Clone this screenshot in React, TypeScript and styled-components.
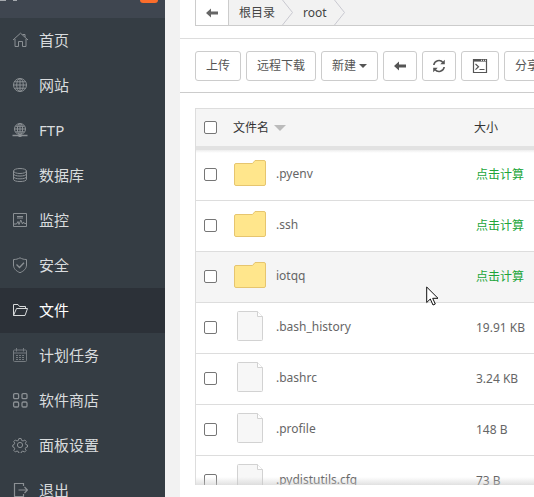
import React from "react";
import styled, { createGlobalStyle } from "styled-components";

const GlobalStyle = createGlobalStyle`
  *, *::before, *::after { box-sizing: border-box; }
  body {
    margin: 0;
    background: #f2f2f2;
    color: #666;
    font-family: "Noto Sans", "Noto Sans CJK SC", sans-serif;
    font-size: 12px;
    line-height: 18px;
  }
  a { color: inherit; text-decoration: none; }
`;

const Page = styled.div`
  display: flex;
  height: 100vh;
  overflow: hidden;
`;

const Sidebar = styled.nav`
  flex: 0 0 165px;
  background: #353d44;
  overflow: hidden;
`;

const SidebarTop = styled.div`
  display: flex;
  justify-content: space-between;
  height: 18px;
  padding-right: 7px;
  background: #3f4650;
`;

const Badge = styled.span`
  width: 18px;
  height: 3px;
  border-radius: 0 0 4px 4px;
  background: #fb6d2b;
`;

const MenuLink = styled.a<{ $active?: boolean }>`
  display: flex;
  align-items: center;
  gap: 11px;
  height: 45px;
  padding: 0 0 2px 12px;
  background: ${(p) => (p.$active ? "#2c3138" : "transparent")};
  color: ${(p) => (p.$active ? "#fff" : "#d9dcde")};
  font-size: 15px;
  line-height: 22px;

  svg { color: ${(p) => (p.$active ? "#d8dadb" : "#8b9094")}; }
`;

const MenuIcon = styled.svg`
  width: 16px;
  height: 16px;
  flex: none;
  fill: none;
  stroke: currentColor;
  stroke-width: 1;
`;

const Main = styled.main`
  display: flex;
  flex-direction: column;
  flex: 1;
  min-width: 0;
  margin-left: 15px;
  background: #fff;
`;

const PathBar = styled.div`
  padding: 0 0 12px 15px;
  border-bottom: 1px solid #ddd;
`;

const Crumbs = styled.div`
  display: flex;
  height: 26px;
  border: solid #ccc;
  border-width: 0 0 1px 1px;
  background: #f2f2f2;
  color: #444;
`;

const BackButton = styled.button`
  display: grid;
  place-items: center;
  width: 33px;
  padding: 0;
  border: 0;
  border-right: 1px solid #ccc;
  background: #fff;
  color: #666;
`;

const Crumb = styled.a`
  display: flex;
  align-items: center;
  gap: 7px;
  padding-left: 10px;
`;

const Chevron = styled.svg`
  width: 11px;
  height: 25px;
  fill: none;
  stroke: #c9c9d0;
`;

const Toolbar = styled.div`
  display: flex;
  gap: 5px;
  padding: 12px 0 11px 15px;
  border-bottom: 1px solid #ccc;
  overflow: hidden;
`;

const ToolButton = styled.button`
  display: flex;
  align-items: center;
  gap: 3px;
  flex: none;
  height: 30px;
  padding: 0 10px;
  border: 1px solid #ccc;
  border-radius: 3px;
  background: #fff;
  color: #555;
  font: inherit;
`;

const IconButton = styled(ToolButton)`
  justify-content: center;
  width: 34px;
  padding: 0;
`;

const TerminalButton = styled(IconButton)`
  width: 38px;
`;

const TableArea = styled.div`
  position: relative;
  flex: 1;
  min-height: 0;
  margin: 15px 0 12px 15px;
  border: solid #ddd;
  border-width: 1px 0 0 1px;
  overflow: hidden;
`;

const BottomFade = styled.div`
  position: absolute;
  inset: auto 0 0 0;
  height: 8px;
  background: linear-gradient(to bottom, rgba(200, 200, 200, 0), rgba(200, 200, 200, 0.55));
`;

const Table = styled.table`
  width: 100%;
  table-layout: fixed;
  border-collapse: separate;
  border-spacing: 0;
`;

const HeadCell = styled.th<{ $width?: number }>`
  width: ${(p) => (p.$width ? `${p.$width}px` : "auto")};
  height: 41px;
  padding: 0;
  border-bottom: 4px solid #e2e2e2;
  background: #f5f5f5;
  color: #333;
  font-weight: 400;
  text-align: left;
`;

const SortLabel = styled.span`
  display: flex;
  align-items: center;
  gap: 5px;
`;

const FileRow = styled.tr<{ $hover?: boolean }>`
  background: ${(p) => (p.$hover ? "#f5f5f5" : "#fff")};

  &:first-child { background: linear-gradient(to bottom, #eee, #fff 3px); }
`;

const Cell = styled.td`
  height: 51px;
  padding: 0;
  border-bottom: 1px solid #ddd;
`;

const CheckCell = styled(Cell)`
  padding-bottom: 2px;
`;

const NameCell = styled(Cell)`
  position: relative;
  padding: 0 0 3px 1px;
`;

const SizeCell = styled(Cell)`
  padding-left: 2px;
`;

const NameLink = styled.a`
  display: flex;
  align-items: center;
  gap: 10px;
`;

const FileIcon = styled.svg`
  width: 32px;
  height: 32px;
  flex: none;
`;

const SizeLink = styled.a`
  color: #20a53a;
`;

const Check = styled.input`
  appearance: none;
  display: block;
  width: 13px;
  height: 13px;
  margin: 0 0 0 8px;
  border: 1px solid #767676;
  border-radius: 2px;
  background: #fff;

  &:checked { background: #20a53a; }
`;

const Pointer = styled.svg`
  position: absolute;
  left: 193px;
  top: 34px;
  width: 13px;
  height: 20px;
  z-index: 1;
  pointer-events: none;
`;

const LeftArrow = () => (
  <svg width="14" height="10" viewBox="0 0 14 10" fill="currentColor" aria-hidden="true">
    <path d="M1 5 6 0.500V3.400h7v3.200H6V9.500z" />
  </svg>
);

const menu: { label: string; icon: React.ReactNode; active?: boolean }[] = [
  {
    label: "首页",
    icon: <path d="M1 8 8.500 1.200 16 8M3 7v7.500h3.500v-5h4v5H14V7M10.500 2.500h2.500v2.500" />,
  },
  {
    label: "网站",
    icon: (
      <>
        <circle cx="8" cy="8" r="6.500" />
        <ellipse cx="8" cy="8" rx="3.300" ry="6.500" />
        <path d="M8 1.500v13M1.500 8h13M2.500 4.800h11M2.500 11.200h11" />
      </>
    ),
  },
  {
    label: "FTP",
    icon: (
      <>
        <circle cx="8" cy="7" r="5.500" />
        <ellipse cx="8" cy="7" rx="2.600" ry="5.500" />
        <path d="M8 1.500v12M2.500 7h11M3.500 4.300h9M3.500 9.800h9" />
        <path d="M0.500 13.500h15M6.500 14.300h3" strokeWidth="1.400" />
      </>
    ),
  },
  {
    label: "数据库",
    icon: (
      <>
        <ellipse cx="8" cy="4" rx="6.500" ry="2.500" />
        <path d="M1.500 4v8.300c0 3 13 3 13 0V4M1.500 6.800c0 3 13 3 13 0M1.500 9.600c0 3 13 3 13 0" />
      </>
    ),
  },
  {
    label: "监控",
    icon: (
      <>
        <path d="M1.500 1.500h13v13h-13zM5 4.500h6M5 6h6" />
        <path d="M2 12h2.500L6 9.500 7 12.500 8.800 8 10.500 12l1-2 1 1.500H14" />
      </>
    ),
  },
  {
    label: "安全",
    icon: (
      <>
        <path d="M8 0.800c2 1.200 4 1.700 6.500 1.700v5.500c0 3.500-2.500 6-6.500 7.700C4 14 1.500 11.500 1.500 8V2.500C4 2.500 6 2 8 .800z" />
        <path d="m4.500 7.500 3 3 4.500-4.800" strokeWidth="1.300" />
      </>
    ),
  },
  {
    label: "文件",
    active: true,
    icon: <path d="M1.500 13.500v-11h4.500l1.500 2h6v2M1.500 13.500l3-7H15.500l-2.500 7z" />,
  },
  {
    label: "计划任务",
    icon: (
      <g opacity="0.750">
        <rect x="1.500" y="3" width="13" height="11.500" rx="1" />
        <path d="M1.500 6h13M4.500 1v3.500M11.500 1v3.500" />
        <path d="M4 8.500h8M4 10.500h8M4 12.500h8" strokeDasharray="2 1" />
      </g>
    ),
  },
  {
    label: "软件商店",
    icon: (
      <g strokeWidth="1.300">
        <rect x="1.600" y="1.600" width="5" height="5" rx="1.200" />
        <rect x="10" y="1.600" width="5" height="5" rx="1.200" />
        <rect x="1.600" y="10" width="5" height="5" rx="1.200" />
        <rect x="10" y="10" width="5" height="5" rx="1.200" />
      </g>
    ),
  },
  {
    label: "面板设置",
    icon: (
      <>
        <circle cx="8" cy="8" r="2.600" />
        <path d="M6.900 1.500h2.200l.5 1.900 1.500.6 1.700-1 1.500 1.600-.9 1.700.5 1.300 1.600.4v2l-1.700.5-.6 1.300.9 1.700-1.500 1.500-1.700-.9-1.400.6-.4 1.600H6.900l-.5-1.700-1.400-.6-1.700.9-1.500-1.500.9-1.600-.6-1.400-1.300-.4V8l1.300-.5.6-1.300-.9-1.700L3.300 3l1.700 1 1.400-.6z" />
      </>
    ),
  },
  {
    label: "退出",
    icon: <path d="M11.500 4V1.500h-9v13h9V12M6.500 8h9M12.500 5l3 3-3 3" strokeWidth="1.200" />,
  },
];

type Entry = { name: string; size?: string; hover?: boolean };

const files: Entry[] = [
  { name: ".pyenv" },
  { name: ".ssh" },
  { name: "iotqq", hover: true },
  { name: ".bash_history", size: "19.91 KB" },
  { name: ".bashrc", size: "3.24 KB" },
  { name: ".profile", size: "148 B" },
  { name: ".pydistutils.cfg", size: "73 B" },
];

const FolderGlyph = () => (
  <FileIcon viewBox="0 1 32 32" aria-hidden="true">
    <path
      d="M.5 8Q.5 6.500 2 6.500H18.500L21 3.500H30Q31.500 3.500 31.500 5V27Q31.500 28.500 30 28.500H2Q.5 28.500.5 27z"
      fill="#ffe68c"
      stroke="#e6c56f"
    />
  </FileIcon>
);

const DocumentGlyph = () => (
  <FileIcon viewBox="0 1 32 32" aria-hidden="true">
    <path
      d="M3.500 2.500Q3.500 1.500 4.500 1.500H23.500L28.500 6.500V29.500Q28.500 30.500 27.500 30.500H4.500Q3.500 30.500 3.500 29.500z"
      fill="#f7f7f7"
      stroke="#d2d2d2"
    />
    <path d="M23.500 1.500v5h5" fill="#fff" stroke="#d2d2d2" />
  </FileIcon>
);

export default function App() {
  return (
    <>
      <GlobalStyle />
      <Page>
        <Sidebar>
          <SidebarTop>
            <svg width="18" height="2" viewBox="0 0 18 2" aria-hidden="true">
              <path d="M0 .5h6M13 .5h4" stroke="#a5a9ae" />
            </svg>
            <Badge />
          </SidebarTop>
          {menu.map((item) => (
            <MenuLink key={item.label} href="#" $active={item.active}>
              <MenuIcon viewBox="0 0 16 16" aria-hidden="true">{item.icon}</MenuIcon>
              {item.label}
            </MenuLink>
          ))}
        </Sidebar>
        <Main>
          <PathBar>
            <Crumbs>
              <BackButton aria-label="返回"><LeftArrow /></BackButton>
              {["根目录", "root"].map((part) => (
                <Crumb key={part} href="#">
                  {part}
                  <Chevron viewBox="0 0 11 25" aria-hidden="true">
                    <path d="M.5 0 10.500 12.500.5 25" />
                  </Chevron>
                </Crumb>
              ))}
            </Crumbs>
          </PathBar>
          <Toolbar>
            <ToolButton>上传</ToolButton>
            <ToolButton>远程下载</ToolButton>
            <ToolButton>
              新建
              <svg width="8" height="4" viewBox="0 0 8 4" fill="currentColor" aria-hidden="true">
                <path d="M0 0h8L4 4z" />
              </svg>
            </ToolButton>
            <IconButton aria-label="后退"><LeftArrow /></IconButton>
            <IconButton aria-label="刷新">
              <svg width="14" height="14" viewBox="0 0 14 14" fill="none" stroke="currentColor" strokeWidth="1.600" aria-hidden="true">
                <path d="M1.800 6A5.200 5.200 0 0 1 11 3.500M12.200 8A5.200 5.200 0 0 1 3 10.500" />
                <path d="M12.800.8V5.300H8.300zM1.200 13.200V8.700h4.500z" fill="currentColor" stroke="none" />
              </svg>
            </IconButton>
            <TerminalButton aria-label="终端">
              <svg width="16" height="16" viewBox="0 0 16 16" fill="none" stroke="currentColor" aria-hidden="true">
                <path d="M1.500 1.500h13v13h-13z" strokeWidth="1.200" />
                <path d="M1 2.300h14" strokeWidth="2.600" />
                <path d="M9 2.300h5" stroke="#fff" strokeDasharray="1 1" />
                <path d="m3.500 6 3 2.800-3 2.800M7.500 11.500h5" strokeWidth="1.200" />
              </svg>
            </TerminalButton>
            <ToolButton>分享列表</ToolButton>
          </Toolbar>
          <TableArea>
            <Table>
              <thead>
                <tr>
                  <HeadCell $width={37}><Check type="checkbox" aria-label="全选" /></HeadCell>
                  <HeadCell $width={241}>
                    <SortLabel>
                      文件名
                      <svg width="12" height="6" viewBox="0 0 12 6" fill="#bbb" aria-hidden="true">
                        <path d="M0 0h12L6 6z" />
                      </svg>
                    </SortLabel>
                  </HeadCell>
                  <HeadCell>大小</HeadCell>
                </tr>
              </thead>
              <tbody>
                {files.map((file) => (
                  <FileRow key={file.name} $hover={file.hover}>
                    <CheckCell><Check type="checkbox" aria-label={file.name} /></CheckCell>
                    <NameCell>
                      <NameLink href="#">
                        {file.size ? <DocumentGlyph /> : <FolderGlyph />}
                        {file.name}
                      </NameLink>
                      {file.hover && (
                        <Pointer viewBox="0 0 13 20" aria-hidden="true">
                          <path d="M.7 1v15.500L4.300 13l2.700 6 2.300-1-2.600-5.700H12z" fill="#fff" stroke="#111" />
                        </Pointer>
                      )}
                    </NameCell>
                    <SizeCell>{file.size ?? <SizeLink href="#">点击计算</SizeLink>}</SizeCell>
                  </FileRow>
                ))}
              </tbody>
            </Table>
            <BottomFade />
          </TableArea>
        </Main>
      </Page>
    </>
  );
}
